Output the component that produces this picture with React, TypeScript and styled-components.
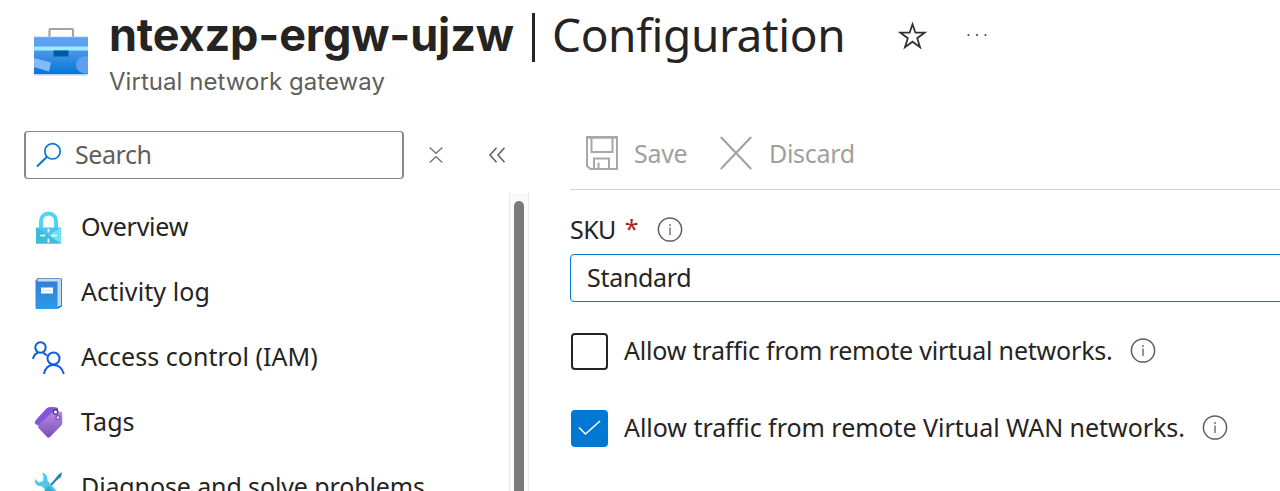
import React from "react";
import styled, { createGlobalStyle } from "styled-components";

const GlobalStyle = createGlobalStyle`
  * { box-sizing: border-box; }
  html, body { margin: 0; background: #fff; overflow: hidden; }
  svg { display: block; flex: none; }
`;

const Page = styled.div`
  width: 1280px;
  height: 491px;
  overflow: hidden;
  display: flex;
  flex-direction: column;
  background: #fff;
  color: #252423;
  font-family: "Noto Sans", "Open Sans", sans-serif;
  font-size: 25px;
`;

const Header = styled.header`
  flex: none;
  height: 131px;
  display: flex;
  padding-left: 34px;
`;

const ResourceIcon = styled.div`
  width: 75px;
  padding-top: 27px;
`;

const Titles = styled.div`
  display: flex;
  flex-direction: column;
`;

const TitleRow = styled.div`
  display: flex;
  align-items: center;
  height: 68px;
`;

const Title = styled.h1`
  display: flex;
  margin: 0;
  height: 68px;
  line-height: 68px;
  font-size: 46px;
  font-weight: 400;
  white-space: pre;
`;

const ResourceName = styled.span`
  width: 423px;
  padding-top: 1px;
  font-family: Inter, sans-serif;
  font-weight: 700;
  font-size: 45px;
  letter-spacing: -0.15px;
`;

const Divider = styled.i`
  width: 3px;
  height: 49px;
  margin: 13px 17px 0 0;
  background: #252423;
`;

const Section = styled.span`
  width: 346px;
  letter-spacing: -0.4px;
`;

const Subtitle = styled.div`
  height: 30px;
  line-height: 28px;
  font-family: Inter, sans-serif;
  font-size: 24px;
  letter-spacing: 0.05px;
  color: #605e5c;
`;

const Body = styled.div`
  flex: 1;
  min-height: 0;
  display: flex;
`;

const Sidebar = styled.aside`
  width: 529px;
  flex: none;
  display: flex;
  flex-direction: column;
`;

const SearchRow = styled.div`
  flex: none;
  height: 62px;
  display: flex;
  align-items: flex-start;
  padding-left: 24px;
`;

const SearchBox = styled.div`
  width: 380px;
  height: 48px;
  display: flex;
  align-items: center;
  gap: 13px;
  padding-left: 10px;
  border: 1px solid #8a8886;
  border-width: 1px 2px 1px 2px;
  border-radius: 4px;
  color: #605e5c;
`;

const IconButton = styled.div<{ $left: number }>`
  height: 48px;
  display: flex;
  align-items: center;
  margin-left: ${(p) => p.$left}px;
`;

const TitleButton = styled(IconButton)`
  padding-top: 4px;
`;

const Text = styled.span<{ $track?: number }>`
  white-space: nowrap;
  line-height: 34px;
  padding-bottom: 2px;
  letter-spacing: ${(p) => p.$track ?? 0}px;
`;

const MenuArea = styled.div`
  flex: 1;
  min-height: 0;
  display: flex;
  justify-content: space-between;
`;

const Menu = styled.nav`
  padding: 3px 0 0 32px;
  overflow: hidden;
`;

const MenuItem = styled.div`
  height: 64.8px;
  display: flex;
  align-items: center;
  gap: 16px;
`;

const MenuText = styled(Text)`
  padding-bottom: 4px;
`;

const ScrollTrack = styled.div`
  width: 20px;
  padding: 8px 0 0 4px;
  background: #fafafa;
  border: solid #e8e8e8;
  border-width: 0 1px;
`;

const ScrollThumb = styled.div`
  width: 10px;
  height: 340px;
  border-radius: 5px;
  background: #7a7a7a;
`;

const Main = styled.main`
  flex: 1;
  min-width: 0;
  padding-left: 41px;
`;

const Toolbar = styled.div`
  height: 59px;
  display: flex;
  align-items: flex-start;
  padding-left: 16px;
  border-bottom: 1px solid #d2d0ce;
`;

const Command = styled.div<{ $width: number; $gap: number }>`
  width: ${(p) => p.$width}px;
  height: 44px;
  display: flex;
  align-items: center;
  gap: ${(p) => p.$gap}px;
  color: #a19f9d;
`;

const CommandText = styled(Text)`
  padding-bottom: 0;
`;

const FieldLabel = styled.div`
  height: 64px;
  display: flex;
  align-items: center;
  padding-top: 16px;
`;

const Required = styled.span`
  width: 32px;
  margin-left: 9px;
  padding-bottom: 5px;
  color: #a4262c;
  line-height: 34px;
`;

const Select = styled.div`
  width: 760px;
  height: 48px;
  display: flex;
  align-items: center;
  padding-left: 16px;
  border: 1px solid #0078d4;
  border-radius: 4px;
`;

const CheckRow = styled.div<{ $top: number }>`
  display: flex;
  align-items: center;
  height: 38px;
  margin: ${(p) => p.$top}px 0 0 1px;
`;

const CheckBox = styled.div<{ $on?: boolean }>`
  width: 37px;
  height: 37px;
  margin-right: 16px;
  flex: none;
  display: flex;
  align-items: center;
  justify-content: center;
  border-radius: 4px;
  border: ${(p) => (p.$on ? "none" : "2px solid #252423")};
  background: ${(p) => (p.$on ? "#0078d4" : "#fff")};
`;

const CheckLabel = styled(Text)<{ $width: number }>`
  width: ${(p) => p.$width}px;
`;

const InfoIcon = () => (
  <svg width="26" height="26" viewBox="0 0 26 26" fill="none">
    <circle cx="13" cy="12.500" r="11.600" stroke="#605e5c" strokeWidth="1.500" />
    <path d="M13 10.500v7.500" stroke="#979593" strokeWidth="2" />
    <path d="M13 7v2" stroke="#979593" strokeWidth="2" />
  </svg>
);

const ToolboxIcon = () => (
  <svg width="54" height="49" viewBox="0 0 54 49">
    <defs>
      <linearGradient id="box" x1="0" y1="0" x2="0" y2="1">
        <stop offset="0" stopColor="#5ea0ef" />
        <stop offset="0.35" stopColor="#4f98ea" />
        <stop offset="1" stopColor="#0078d4" />
      </linearGradient>
    </defs>
    <path d="M15.500 12V3q0-1 1-1h21.500q1 0 1 1v9" fill="none" stroke="#a3a3a3" strokeWidth="2.200" />
    <path d="M0 9.500h54v37q0 2-2 2H2q-2 0-2-2z" fill="#b4d2f6" />
    <path d="M0 10.500h54V47H0z" fill="url(#box)" />
    <path d="M0 10.500h54v9H0z" fill="#5ea0ef" />
    <path d="M0 19.500h54v4H0z" fill="#9cebff" />
    <path d="M19.500 23.500h15v6h-15z" fill="#005ba1" />
    <path d="M0 31l17 4.500-2 9L0 40z" fill="#83b9f9" />
    <path d="M54 29.500c-7-1-12 3-12 8.500s5 9 12 8.500z" fill="#5ea0ef" />
  </svg>
);

const StarIcon = () => (
  <svg width="30" height="30" viewBox="0 0 30 30">
    <path
      d="M14.500 3.200l2.900 8.500h9.200l-7.400 5.500 2.800 9-7.500-5.500-7.500 5.500 2.800-9-7.400-5.500h9.200z"
      fill="none"
      stroke="#323130"
      strokeWidth="1.800"
    />
  </svg>
);

const MoreIcon = () => (
  <svg width="24" height="6" viewBox="0 0 24 6" fill="#484644">
    <circle cx="2.500" cy="2" r="1.100" />
    <circle cx="11" cy="2" r="1.100" />
    <circle cx="19.500" cy="2" r="1.100" />
  </svg>
);

const SearchIcon = () => (
  <svg width="26" height="26" viewBox="0 0 26 26" fill="none" stroke="#0078d4">
    <circle cx="16.500" cy="9.300" r="7.700" strokeWidth="1.700" />
    <path d="M11 14.800L1 24.500" strokeWidth="2" />
  </svg>
);

const CollapseAllIcon = () => (
  <svg width="14" height="18" viewBox="0 0 14 18" fill="none" stroke="#797775" strokeWidth="1.400">
    <path d="M.7 1.500l6.300 5.800 6.300-5.800M.7 16.500L7 10.700l6.300 5.800" />
  </svg>
);

const ChevronsIcon = () => (
  <svg width="17" height="16" viewBox="0 0 17 16" fill="none" stroke="#605e5c" strokeWidth="1.500">
    <path d="M7.500.800L1 8l6.500 7.200M15.500.800L9 8l6.500 7.200" />
  </svg>
);

const LockIcon = () => (
  <svg width="33" height="34" viewBox="0 0 33 34">
    <path d="M9 18v-8a7.500 7.500 0 0 1 15 0v8" fill="none" stroke="#50d4f5" strokeWidth="4" />
    <path d="M4 16.500h25v16H4z" fill="#4fc3e8" />
    <path d="M4 16.500l12.500 8L4 32.500z" fill="#3cbadb" />
    <path d="M29 16.500l-12.500 8 12.500 8z" fill="#6fe2f8" />
    <path d="M4 32.500l12.500-8 12.500 8z" fill="#45b8d8" />
    <path d="M16.500 18v3.500m0 6v3.500M8 24.500h5m7 0h5" stroke="#e9fbff" strokeWidth="1.600" />
    <path d="M15.200 19.500l1.300-1.500 1.300 1.500M15.200 30l1.300 1.500 1.300-1.500M11.500 23l1.500 1.500-1.500 1.500M21.500 23L20 24.500l1.500 1.500" fill="none" stroke="#e9fbff" strokeWidth=".8" />
  </svg>
);

const LogIcon = () => (
  <svg width="33" height="33" viewBox="0 0 33 33">
    <defs>
      <linearGradient id="log" x1="0" y1="0" x2="0" y2="1">
        <stop offset="0" stopColor="#2f7ed8" />
        <stop offset="1" stopColor="#2e9ae8" />
      </linearGradient>
    </defs>
    <path d="M5 1h23.500l1.300 1v27.500L26 31.500H5z" fill="#185ba8" />
    <path d="M5.500 1.500H29v27l-3.500 1.500H5z" fill="#c3daf4" />
    <path d="M4.500 2Q3.500 2.500 3.500 3.500V31q0 1 1 1h21V4.500H6q-1.500 0-1.500-2.500z" fill="url(#log)" />
    <path d="M9 10.500h12v6H9z" fill="#fff" />
    <path d="M9 12.500h12v2H9z" fill="#d9edfc" />
  </svg>
);

const PeopleIcon = () => (
  <svg width="33" height="34" viewBox="0 0 33 34" fill="none" stroke="#0f5be0" strokeWidth="2">
    <circle cx="8.500" cy="6.500" r="5.200" />
    <path d="M1 18c.5-3 2.500-5.500 5-6.300M11 11.700c2 .8 3 1.600 4 3" />
    <circle cx="21.500" cy="17.500" r="6" />
    <path d="M12 33c1-5 4-9 9.500-9s9 4 10.300 9" />
  </svg>
);

const TagIcon = () => (
  <svg width="33" height="33" viewBox="0 0 33 33">
    <defs>
      <linearGradient id="tag" x1="0" y1="0" x2="0" y2="1">
        <stop offset="0" stopColor="#b88be4" />
        <stop offset="1" stopColor="#7a4fb5" />
      </linearGradient>
    </defs>
    <path d="M16.500 1.200q6.500-.7 9.500.8l1 9L9 20.500l-5-2Q2 16.500 3.500 14.500L13 4q1.500-2.300 3.500-2.800z" fill="#8057d8" />
    <path d="M20 6.500l8.500-1q2 0 1.800 2v9q0 2-1.500 3.500L18 31q-1.500 1.500-3 0l-8.500-9q-1-1.500 0-3z" fill="url(#tag)" />
    <circle cx="23.500" cy="6" r="2.200" fill="#fff" stroke="#4b2f86" strokeWidth="1.200" />
    <circle cx="26" cy="11.500" r="2.100" fill="#d9c4f2" stroke="#7a4fb5" strokeWidth="1.200" />
  </svg>
);

const ToolsIcon = () => (
  <svg width="33" height="34" viewBox="0 0 33 34" fill="none">
    <path d="M29 3L10 24 5 30" stroke="#1f7fb0" strokeWidth="2" />
    <path d="M30 1l-1 5-4 3-1.500-1.500L26 4z" fill="#2b86b8" />
    <path d="M10 1.500c4 1 6 4 5.500 8L29 25l-4 5L9.500 15C5 15.500 2.500 13 3 8l4 3.500 4-1.500.5-4.500z" fill="#50c8ee" />
    <path d="M13 18l4-3 6 7-3 5z" fill="#3aa9cf" />
  </svg>
);

const SaveIcon = () => (
  <svg width="32" height="34" viewBox="0 0 32 34" fill="none" stroke="#a8a8a8" strokeWidth="2">
    <path d="M1 1h30v32H4.500L1 30z" />
    <path d="M5.500 1v15h21V1" />
    <path d="M8 33V22.500h15V33M12.500 33v-6.500" />
    <path d="M1 1.500h30" strokeWidth="2.500" />
  </svg>
);

const DiscardIcon = () => (
  <svg width="32" height="34" viewBox="0 0 32 34" stroke="#a19f9d" strokeWidth="2">
    <path d="M.8 1l30.400 32M31.200 1L.8 33" />
  </svg>
);

const CheckIcon = () => (
  <svg width="24" height="18" viewBox="0 0 24 18" fill="none" stroke="#fff" strokeWidth="1.600">
    <path d="M1 8.500l6.500 6.500L22 2" />
  </svg>
);

const items = [
  { label: "Overview", track: -0.25, Icon: LockIcon },
  { label: "Activity log", track: 0.1, Icon: LogIcon },
  { label: "Access control (IAM)", track: 0.03, Icon: PeopleIcon },
  { label: "Tags", track: 0.1, Icon: TagIcon },
  { label: "Diagnose and solve problems", track: -0.12, Icon: ToolsIcon },
];

export default function App() {
  return (
    <Page>
      <GlobalStyle />
      <Header>
        <ResourceIcon><ToolboxIcon /></ResourceIcon>
        <Titles>
          <TitleRow>
            <Title>
              <ResourceName>ntexzp-ergw-ujzw</ResourceName>
              <Divider />
              <Section>Configuration</Section>
            </Title>
            <TitleButton $left={0}><StarIcon /></TitleButton>
            <TitleButton $left={38}><MoreIcon /></TitleButton>
          </TitleRow>
          <Subtitle>Virtual network gateway</Subtitle>
        </Titles>
      </Header>
      <Body>
        <Sidebar>
          <SearchRow>
            <SearchBox>
              <SearchIcon />
              <Text $track={-0.45}>Search</Text>
            </SearchBox>
            <IconButton $left={25}><CollapseAllIcon /></IconButton>
            <IconButton $left={46}><ChevronsIcon /></IconButton>
          </SearchRow>
          <MenuArea>
            <Menu>
              {items.map(({ label, track, Icon }) => (
                <MenuItem key={label}>
                  <Icon />
                  <MenuText $track={track}>{label}</MenuText>
                </MenuItem>
              ))}
            </Menu>
            <ScrollTrack><ScrollThumb /></ScrollTrack>
          </MenuArea>
        </Sidebar>
        <Main>
          <Toolbar>
            <Command $width={134} $gap={16}>
              <SaveIcon />
              <CommandText $track={-0.3}>Save</CommandText>
            </Command>
            <Command $width={140} $gap={17}>
              <DiscardIcon />
              <CommandText $track={-0.3}>Discard</CommandText>
            </Command>
          </Toolbar>
          <FieldLabel>
            <Text $track={-0.6}>SKU</Text>
            <Required>*</Required>
            <InfoIcon />
          </FieldLabel>
          <Select><Text $track={-0.3}>Standard</Text></Select>
          <CheckRow $top={30}>
            <CheckBox />
            <CheckLabel $width={506} $track={-0.19}>Allow traffic from remote virtual networks.</CheckLabel>
            <InfoIcon />
          </CheckRow>
          <CheckRow $top={39}>
            <CheckBox $on><CheckIcon /></CheckBox>
            <CheckLabel $width={578} $track={-0.04}>Allow traffic from remote Virtual WAN networks.</CheckLabel>
            <InfoIcon />
          </CheckRow>
        </Main>
      </Body>
    </Page>
  );
}
